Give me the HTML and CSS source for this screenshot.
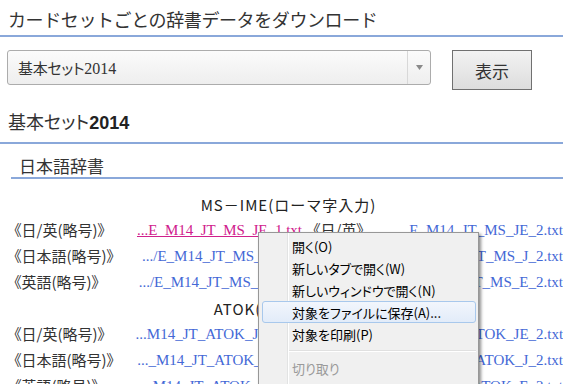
FILE: index.html
```html
<!DOCTYPE html>
<html lang="ja">
<head>
<meta charset="utf-8">
<title>辞書データ</title>
<link rel="stylesheet" href="styles.css">
</head>
<body>
<div class="page">
  <h1 class="title">カードセットごとの辞書データをダウンロード</h1>
  <div class="form">
    <div class="select">
      <span class="select-text"><span class="select-jp">基本セット</span>2014</span>
      <span class="select-arrow"><svg width="7" height="5" viewBox="0 0 7 5"><path d="M0 0h7L3.5 5z" fill="#8a8a8a"/></svg></span>
    </div>
    <button class="btn" type="button">表示</button>
  </div>
  <h2 class="set-name"><span class="jp">基本セット</span><b>2014</b></h2>
  <h3 class="dict-name">日本語辞書</h3>
  <div class="table">
    <div class="group">MS－IME(ローマ字入力)</div>
    <div class="row">
      <span class="label">《日/英(略号)》</span>
      <a class="link active">...E_M14_JT_MS_JE_1.txt</a>
      <span class="label2">《日/英》</span>
      <a class="link">E_M14_JT_MS_JE_2.txt</a>
    </div>
    <div class="row">
      <span class="label">《日本語(略号)》</span>
      <a class="link">.../E_M14_JT_MS_J_1.txt</a>
      <span class="label2">《日本語》</span>
      <a class="link">E_M14_JT_MS_J_2.txt</a>
    </div>
    <div class="row">
      <span class="label">《英語(略号)》</span>
      <a class="link">.../E_M14_JT_MS_E_1.txt</a>
      <span class="label2">《英語》</span>
      <a class="link">E_M14_JT_MS_E_2.txt</a>
    </div>
    <div class="group">ATOK(ローマ字入力)</div>
    <div class="row">
      <span class="label">《日/英(略号)》</span>
      <a class="link">...M14_JT_ATOK_JE_1.txt</a>
      <span class="label2">《日/英》</span>
      <a class="link">M14_JT_ATOK_JE_2.txt</a>
    </div>
    <div class="row">
      <span class="label">《日本語(略号)》</span>
      <a class="link">..._M14_JT_ATOK_J_1.txt</a>
      <span class="label2">《日本語》</span>
      <a class="link">_M14_JT_ATOK_J_2.txt</a>
    </div>
    <div class="row">
      <span class="label">《英語(略号)》</span>
      <a class="link">...M14_JT_ATOK_E_1.txt</a>
      <span class="label2">《英語》</span>
      <a class="link">M14_JT_ATOK_E_2.txt</a>
    </div>
  </div>
</div>
<div class="menu">
  <div class="item">開く(O)</div>
  <div class="item">新しいタブで開く(W)</div>
  <div class="item">新しいウィンドウで開く(N)</div>
  <div class="item hover">対象をファイルに保存(A)...</div>
  <div class="item">対象を印刷(P)</div>
  <div class="sep"></div>
  <div class="item disabled">切り取り</div>
</div>
</body>
</html>
```

FILE: styles.css
```css
html, body {
  margin: 0;
  padding: 0;
  background: #ffffff;
  overflow: hidden;
}
body {
  font-family: "Noto Sans CJK JP", "Noto Sans", sans-serif;
  color: #333333;
  position: relative;
  width: 563px;
  height: 384px;
}
.page {
  display: flex;
  flex-direction: column;
}
.title {
  margin: 0;
  padding: 4px 8px 0;
  height: 31px;
  font-size: 18px;
  letter-spacing: -0.4px;
  font-weight: normal;
  line-height: 30px;
  color: #333333;
  border-bottom: 2px solid #8aa8da;
}
.form {
  display: flex;
  align-items: flex-start;
  padding: 13px 0 0 7px;
  gap: 21px;
}
.select {
  width: 422px;
  height: 33px;
  border: 1px solid #acacac;
  border-radius: 3px;
  background: linear-gradient(#fbfbfb, #eeeeee);
  display: flex;
  align-items: center;
}
.select-text {
  flex: 1;
  padding-left: 10px;
  font-family: "Liberation Serif", serif;
  font-size: 16px;
  color: #333333;
}
.select-jp {
  font-family: "Noto Sans CJK JP", sans-serif;
  font-size: 15px;
  font-feature-settings: "palt";
  letter-spacing: -0.3px;
}
.select-arrow {
  width: 22px;
  height: 33px;
  border-left: 1px solid #d8d8d8;
  display: flex;
  align-items: center;
  justify-content: center;
}
.btn {
  width: 80px;
  height: 40px;
  border: 1px solid #707070;
  border-radius: 0;
  background: linear-gradient(#f2f2f2, #dddddd);
  font-family: "Noto Sans CJK JP", sans-serif;
  font-size: 17px;
  color: #333333;
  padding: 0;
}
.set-name {
  margin: 14px 0 0;
  padding-left: 8px;
  height: 38px;
  line-height: 34px;
  font-size: 18px;
  border-bottom: 2px solid #8aa8da;
}
.set-name .jp {
  font-weight: normal;
  font-feature-settings: "palt";
}
.set-name b {
  font-family: "Liberation Sans", sans-serif;
  font-weight: bold;
  color: #222222;
}
.dict-name {
  margin: 0 0 0 11px;
  padding-left: 8px;
  height: 33px;
  line-height: 44px;
  font-size: 17px;
  font-weight: normal;
  border-bottom: 2px solid #8aa8da;
}
.table {
  display: flex;
  flex-direction: column;
  padding-top: 12px;
}
.group {
  height: 26px;
  line-height: 28px;
  text-align: center;
  padding-left: 14px;
  font-size: 15px;
  letter-spacing: 1px;
  color: #222222;
}
.row {
  display: grid;
  grid-template-columns: 119px 169px 106px 155px;
  padding-left: 14px;
  height: 26px;
  line-height: 26px;
  white-space: nowrap;
}
.label, .label2 {
  font-size: 15px;
  font-feature-settings: "palt";
  color: #333333;
  overflow: hidden;
}
.label2 {
  padding-left: 11px;
}
.link {
  font-family: "Liberation Serif", serif;
  font-size: 15px;
  color: #4468d6;
  text-align: right;
  overflow: hidden;
}
.link.active {
  color: #d0208c;
  text-decoration: underline;
}
.menu {
  position: absolute;
  left: 258px;
  top: 232px;
  width: 219px;
  height: 160px;
  padding: 2px 0;
  border: 1px solid #979797;
  background: linear-gradient(to right, #f0f0f0 0, #f0f0f0 28px, #e2e3e3 28px, #e2e3e3 29px, #ffffff 29px, #ffffff 30px, #f0f0f0 30px);
  box-shadow: 2px 2px 3px rgba(0, 0, 0, 0.45);
  font-family: "Noto Sans CJK JP", sans-serif;
  font-size: 13px;
  font-feature-settings: "palt";
  color: #000000;
}
.item {
  height: 22px;
  line-height: 22px;
  padding-left: 29px;
  margin: 0 2px 0 3px;
  border: 1px solid transparent;
  border-radius: 3px;
  box-sizing: border-box;
}
.item.hover {
  border-color: #a8c8ec;
  background: linear-gradient(#f2f6fc, #e2ecf9);
}
.item.disabled {
  color: #9a9a9a;
}
.sep {
  height: 12px;
  margin-left: 30px;
  margin-right: 2px;
  background: linear-gradient(#f0f0f0 0, #f0f0f0 5px, #e0e0e0 5px, #e0e0e0 6px, #ffffff 6px, #ffffff 7px, #f0f0f0 7px);
}
```
